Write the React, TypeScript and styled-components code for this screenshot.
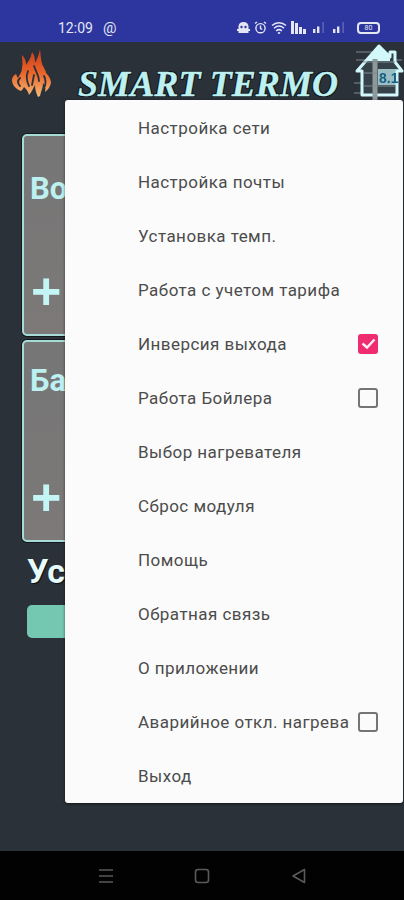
import React from 'react';
import styled, { createGlobalStyle } from 'styled-components';

const GlobalStyle = createGlobalStyle`
  html, body { margin: 0; padding: 0; background: #2a3139; }
  * { box-sizing: border-box; }
`;

const menuItems = [
  { label: 'Настройка сети' },
  { label: 'Настройка почты' },
  { label: 'Установка темп.' },
  { label: 'Работа с учетом тарифа' },
  { label: 'Инверсия выхода', checked: true },
  { label: 'Работа Бойлера', checked: false },
  { label: 'Выбор нагревателя' },
  { label: 'Сброс модуля' },
  { label: 'Помощь' },
  { label: 'Обратная связь' },
  { label: 'О приложении' },
  { label: 'Аварийное откл. нагрева', checked: false },
  { label: 'Выход' },
];

const Flame = () => (
  <FlameSvg width="44" height="50" viewBox="0 0 44 50" fill="none">
    <defs>
      <linearGradient id="fire" gradientUnits="userSpaceOnUse" x1="0" y1="0" x2="0" y2="50">
        <stop offset="0" stopColor="#c93a1e" />
        <stop offset="0.5" stopColor="#ea6428" />
        <stop offset="1" stopColor="#f6bd7c" />
      </linearGradient>
    </defs>
    <path
      fill="url(#fire)"
      d="M30 1C31 9 31 14 33 18C35 22 36 23 36 25C39 28 41 31 41 35C40 39 38 42 35 44C36 40 35 37 33 35C33 40 31 43 30 48L28 49C26 45 25 41 25 37C23 40 22 44 19 47C18 43 16 41 14 39C13 41 12 42 11 43C6 41 2 37 2 32C2 29 4 27 6 26C7 28 7 29 8 30C10 26 12 24 12 20C13 16 12 12 12 7C15 10 16 13 16 17C18 14 21 10 22 4C25 8 25 11 25 15C27 11 29 7 30 1Z"
    />
    <g stroke="#2a3139" strokeWidth="1.800" strokeLinecap="round">
      <path d="M24 18C26 24 29 27 29 33" />
      <path d="M18 23C16 28 16 32 19 38" />
      <path d="M10 30C7 33 8 36 10 38" />
      <path d="M34 28C36 32 36 34 35 38" />
      <path d="M24 27C23 31 23 33 22 37" />
    </g>
  </FlameSvg>
);

const House = () => (
  <HouseSvg width="52" height="60" viewBox="0 0 52 60">
    <path stroke="#7f8b90" strokeWidth="1" fill="none" d="M4 9h17M4 17h14M2 40h8M2 50h8M36 17h14" />
    <path
      fill="#36424a"
      stroke="#d2f8fb"
      strokeWidth="3"
      strokeLinejoin="round"
      d="M27 3 L38 14 V9 H43 V19 L50 28 H45 V52 H10 V28 H5 Z"
    />
    <path fill="#d2f8fb" d="M27 3L38 14V18H16V14Z" />
    <path stroke="#8f989b" strokeWidth="5" d="M23 16V60" />
    <path stroke="#7f8b90" strokeWidth="1" fill="none" d="M11 19h32M11 30h14M11 43h32" />
    <rect x="26" y="26" width="20" height="16" fill="#c4f4f8" opacity="0.7" />
    <DigitText x="27" y="40">8.1</DigitText>
  </HouseSvg>
);

const Check = () => (
  <svg width="15" height="12" viewBox="0 0 15 12">
    <path d="M1.500 5.500l4.500 4 7.500-8" fill="none" stroke="#ffeef3" strokeWidth="2.400" />
  </svg>
);

const Wifi = () => (
  <svg width="16" height="14" viewBox="0 0 16 14" fill="none" stroke="#e4e6f4" strokeWidth="1.500">
    <path d="M1 4.500c4-3.600 10-3.600 14 0M3 7.200c3-2.600 7-2.600 10 0M5.200 9.800c1.700-1.400 3.900-1.400 5.600 0M7 12.300c.6-.5 1.400-.5 2 0" />
  </svg>
);

const Signal = () => (
  <svg width="12" height="11" viewBox="0 0 12 11" fill="#e4e6f4">
    <rect x="0" y="7" width="2.400" height="4" />
    <rect x="4" y="4.500" width="2.400" height="6.500" />
    <rect x="9.600" y="0" width="1" height="11" opacity="0.4" />
  </svg>
);

const App = () => (
  <>
    <GlobalStyle />
    <Screen>
      <StatusBar>
        <Time>12:09</Time>
        <AtSign>@</AtSign>
        <StatusIcons>
          <svg width="13" height="13" viewBox="0 0 13 13" fill="#e4e6f4">
            <path d="M6.500 1C3.400 1 1.500 3 1.500 5.500V12h10V5.500C11.500 3 9.600 1 6.500 1z" />
            <circle cx="4.500" cy="6" r="1.200" fill="#2d369f" />
            <circle cx="8.500" cy="6" r="1.200" fill="#2d369f" />
            <rect x="0" y="8" width="13" height="2" />
          </svg>
          <svg width="13" height="13" viewBox="0 0 13 13" fill="none" stroke="#e4e6f4" strokeWidth="1.400">
            <circle cx="6.500" cy="7.200" r="4.600" />
            <path d="M6.500 4.500v3l1.800 1M1 2.500L3 1M12 2.500L10 1" />
          </svg>
          <Wifi />
          <svg width="16" height="13" viewBox="0 0 16 13" fill="#e4e6f4">
            <rect x="0" y="0" width="3" height="13" />
            <rect x="4" y="2" width="3" height="11" />
            <rect x="8" y="6" width="3" height="7" />
            <rect x="12" y="8" width="3" height="5" />
          </svg>
          <SignalGap>
            <Signal />
            <Signal />
          </SignalGap>
          <Battery>80</Battery>
        </StatusIcons>
      </StatusBar>

      <Header>
        <LogoSlot>
          <Flame />
        </LogoSlot>
        <Title>SMART TERMO</Title>
        <HouseSlot>
          <House />
        </HouseSlot>
      </Header>

      <Content>
        <Card>
          <CardTitle $top={35}>Вода</CardTitle>
          <Plus>+</Plus>
        </Card>
        <Card>
          <CardTitle $top={21}>Батарея</CardTitle>
          <Plus>+</Plus>
        </Card>
        <SectionTitle>Уст</SectionTitle>
        <SetButton />
      </Content>

      <NavBar>
        <svg width="16" height="16" viewBox="0 0 16 16" stroke="#5a5a5a" strokeWidth="1.600">
          <path d="M1 2h14M1 8h14M1 14h14" />
        </svg>
        <svg width="16" height="16" viewBox="0 0 16 16" fill="none" stroke="#5a5a5a" strokeWidth="1.600">
          <rect x="1.500" y="1.500" width="13" height="13" rx="2.500" />
        </svg>
        <svg width="16" height="16" viewBox="0 0 16 16" fill="none" stroke="#5a5a5a" strokeWidth="1.600">
          <path d="M14.500 1.500V14.500L3 8z" strokeLinejoin="round" />
        </svg>
      </NavBar>

      <Menu>
        {menuItems.map((item) => (
          <MenuRow key={item.label}>
            <MenuLabel>{item.label}</MenuLabel>
            {item.checked !== undefined && <CheckBox $checked={item.checked}>{item.checked && <Check />}</CheckBox>}
          </MenuRow>
        ))}
      </Menu>
    </Screen>
  </>
);

const Screen = styled.div`
  position: relative;
  width: 404px;
  height: 900px;
  overflow: hidden;
  display: flex;
  flex-direction: column;
  background: #2a3139;
  font-family: Roboto, 'Liberation Sans', sans-serif;
`;

const StatusBar = styled.div`
  height: 42px;
  flex: none;
  display: flex;
  align-items: center;
  padding: 13px 24px 0 58px;
  background: #2d369f;
  color: #e4e6f4;
`;

const Time = styled.span`
  font-size: 14px;
`;

const AtSign = styled.span`
  margin-left: 10px;
  font-size: 15px;
`;

const StatusIcons = styled.div`
  margin-left: auto;
  display: flex;
  align-items: center;
  gap: 4px;
`;

const SignalGap = styled.div`
  display: flex;
  gap: 8px;
  margin: 0 8px 0 2px;
`;

const Battery = styled.div`
  width: 23px;
  height: 12px;
  border: 2px solid #e4e6f4;
  border-radius: 4px;
  font-size: 7px;
  line-height: 8px;
  text-align: center;
`;

const Header = styled.div`
  height: 92px;
  flex: none;
  display: flex;
  align-items: flex-start;
`;

const LogoSlot = styled.div`
  width: 78px;
  padding: 6px 0 0 10px;
  flex: none;
`;

const FlameSvg = styled.svg`
  filter: blur(0.5px);
`;

const HouseSvg = styled.svg`
  filter: blur(0.4px);
`;

const DigitText = styled.text`
  font-family: 'Liberation Sans', sans-serif;
  font-weight: 700;
  font-size: 14px;
  fill: #17607f;
`;

const Title = styled.div`
  width: 270px;
  margin-top: 24px;
  font-family: 'Liberation Serif', serif;
  font-style: italic;
  font-weight: 700;
  font-size: 36px;
  line-height: 36px;
  letter-spacing: 0.100px;
  white-space: nowrap;
  color: #bdf1f1;
  -webkit-text-stroke: 0.4px #bdf1f1;
  text-shadow: -1px 1px 0 #0c1014, 1px 1px 0 #0c1014, 1px -1px 0 #0c1014, -1px -1px 0 #0c1014;
`;

const HouseSlot = styled.div`
  flex: none;
  margin-left: 4px;
  padding-top: 1px;
`;

const Content = styled.div`
  flex: 1;
  padding: 0 22px;
`;

const Card = styled.div`
  height: 202px;
  margin-bottom: 4px;
  padding: 0 6px;
  display: flex;
  flex-direction: column;
  justify-content: space-between;
  background: linear-gradient(180deg, #767676, #7c7978);
  border: 2px solid #a6dcd8;
  border-radius: 5px;
  box-shadow: 0 0 0 1px #14181c;
`;

const CardTitle = styled.div<{ $top: number }>`
  margin-top: ${(p) => p.$top}px;
  font-size: 31px;
  line-height: 36px;
  font-weight: 700;
  color: #bdf1f1;
`;

const Plus = styled.div`
  margin: 0 0 13px 1px;
  width: 30px;
  font-size: 52px;
  line-height: 60px;
  font-weight: 700;
  color: #c4f5f5;
  font-family: 'Liberation Sans', sans-serif;
`;

const SectionTitle = styled.div`
  margin: 7px 0 0 5px;
  font-size: 34px;
  line-height: 44px;
  font-weight: 700;
  color: #e6fbfb;
  text-shadow: 1px 1px 1px #0c1014;
`;

const SetButton = styled.div`
  width: 340px;
  height: 33px;
  margin: 12px 0 0 5px;
  border-radius: 5px;
  background: #74c7b1;
`;

const NavBar = styled.div`
  height: 49px;
  flex: none;
  display: flex;
  align-items: center;
  justify-content: space-between;
  padding: 0 98px;
  background: #020202;
`;

const Menu = styled.div`
  position: absolute;
  top: 100px;
  left: 65px;
  right: 1px;
  padding-top: 1px;
  height: 703px;
  background: #fbfbfb;
  border-radius: 3px;
  box-shadow: 0 1px 3px rgba(0, 0, 0, 0.55);
`;

const MenuRow = styled.div`
  height: 54px;
  display: flex;
  align-items: center;
  justify-content: space-between;
  padding: 0 25px 0 73px;
`;

const MenuLabel = styled.span`
  font-size: 17px;
  letter-spacing: 0.450px;
  color: #4c4c4c;
  white-space: nowrap;
`;

const CheckBox = styled.span<{ $checked: boolean }>`
  width: 20px;
  height: 20px;
  flex: none;
  display: flex;
  align-items: center;
  justify-content: center;
  border-radius: 3px;
  background: ${(p) => (p.$checked ? '#f02c70' : 'transparent')};
  border: ${(p) => (p.$checked ? 'none' : '2.500px solid #757575')};
`;

export default App;
